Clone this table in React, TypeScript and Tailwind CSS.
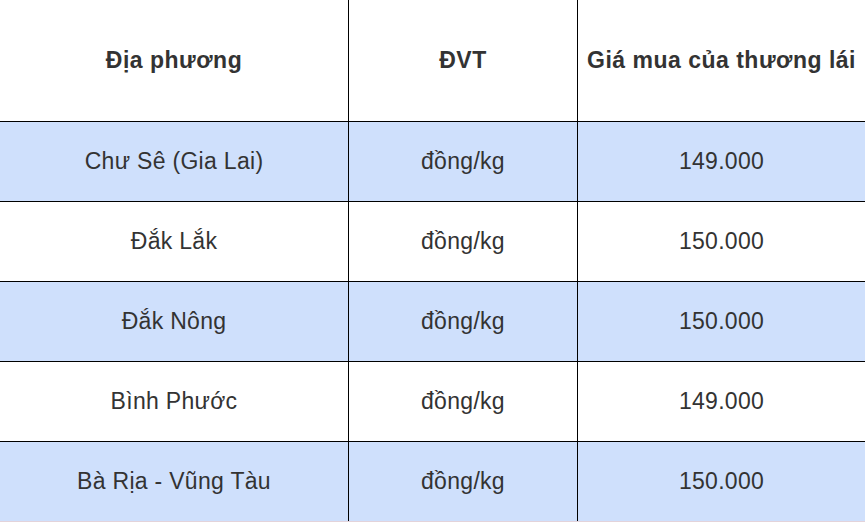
const rows = [
  { place: "Chư Sê (Gia Lai)", price: "149.000" },
  { place: "Đắk Lắk", price: "150.000" },
  { place: "Đắk Nông", price: "150.000" },
  { place: "Bình Phước", price: "149.000" },
  { place: "Bà Rịa - Vũng Tàu", price: "150.000" },
];

// Coffee price table: header row plus alternating blue/white rows.
export default function App() {
  return (
    <div
      className="w-[865px] h-[522px] overflow-hidden bg-white text-[#333333]"
      style={{ fontFamily: '"Liberation Sans", Arial, sans-serif' }}
    >
      <div className="grid grid-cols-[348px_1px_228px_1px_287px] h-[121px] text-[23px] font-bold tracking-[0.5px]">
        <div className="flex items-center justify-center pt-[-1px]">Địa phương</div>
        <div className="bg-black" />
        <div className="flex items-center justify-center">ĐVT</div>
        <div className="bg-black" />
        <div className="flex items-center justify-center whitespace-nowrap">Giá mua của thương lái</div>
      </div>
      {rows.map((r, i) => (
        <div
          key={i}
          className={
            "grid grid-cols-[348px_1px_228px_1px_287px] h-[80px] border-t border-black text-[23px] tracking-[0.3px] " +
            (i % 2 === 0 ? "bg-[#cfe0fc]" : "bg-white")
          }
        >
          <div className="flex items-center justify-center">{r.place}</div>
          <div className="bg-black" />
          <div className="flex items-center justify-center">đồng/kg</div>
          <div className="bg-black" />
          <div className="flex items-center justify-center">{r.price}</div>
        </div>
      ))}
      <div className="h-px bg-[#e3d3da]" />
    </div>
  );
}
